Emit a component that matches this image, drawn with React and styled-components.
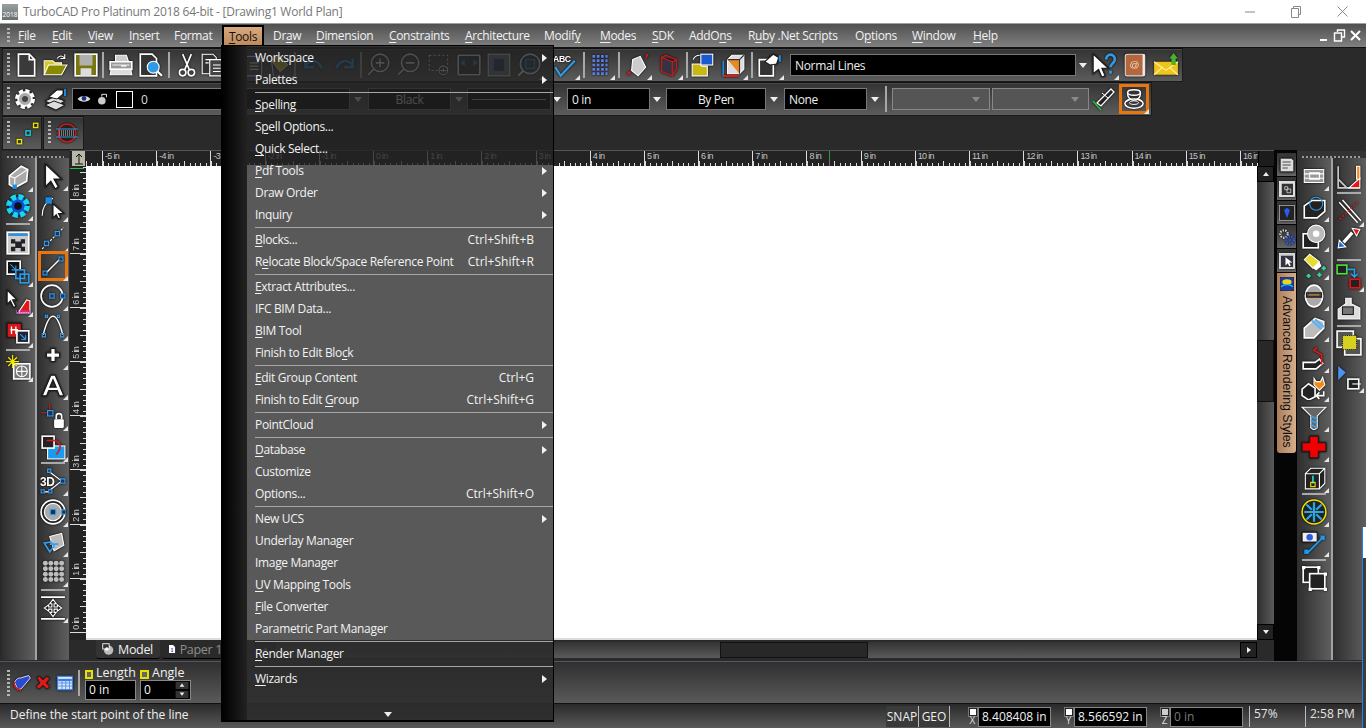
import React from "react"
import styled, { createGlobalStyle } from "styled-components"

const UI = `"Open Sans", "Noto Sans", sans-serif`

//Styles
const GlobalStyles = createGlobalStyle`
  html, body { margin: 0; padding: 0; background: #2a2a2a; overflow: hidden; }
  * { box-sizing: border-box; }
  u { text-underline-offset: 2px; text-decoration-thickness: 1px; }
`
const Screen = styled.div`
  position: relative;
  width: 1366px;
  height: 728px;
  overflow: hidden;
  display: flex;
  flex-direction: column;
  background: #2a2a2a;
  font-family: ${UI};
  font-size: 12px;
  letter-spacing: -0.33px;
  color: #f0f0f0;
`
const TitleBar = styled.div`
  height: 24px;
  flex: none;
  background: #fff;
  display: flex;
  align-items: center;
  padding-left: 2px;
  border-bottom: 1px solid #a0a0a0;
  color: #777;
  letter-spacing: -0.26px;
`
const AppBadge = styled.div`
  width: 16px;
  height: 16px;
  margin-right: 5px;
  background: linear-gradient(#9aa0a0, #6a7070);
  color: #fff;
  font-size: 6.5px;
  letter-spacing: 0;
  display: flex;
  align-items: flex-end;
  justify-content: center;
  line-height: 10px;
`
const WindowButtons = styled.div`
  margin-left: auto;
  display: flex;
  margin-right: 1px;
`
const WindowButton = styled.div`
  width: 46px;
  height: 22px;
  display: flex;
  align-items: center;
  justify-content: center;
`
const MenuBar = styled.div`
  height: 24px;
  flex: none;
  display: flex;
  align-items: center;
  padding-left: 7px;
  background: linear-gradient(#505050, #808080);
  border-bottom: 1px solid #111;
`
const GripV = styled.div`
  width: 3px;
  height: ${(p) => p.$h || 22}px;
  flex: none;
  margin-left: ${(p) => p.$ml || 0}px;
  background: repeating-linear-gradient(#b5b5b5 0 2px, transparent 2px 4px);
`
const MenuItem = styled.div`
  width: ${(p) => p.$w}px;
  flex: none;
  margin-left: ${(p) => p.$ml || 0}px;
  white-space: nowrap;
  color: #f2f2f2;
`
const ActiveMenuItem = styled.div`
  width: 42px;
  height: 21px;
  flex: none;
  margin-left: -6px;
  margin-right: 9px;
  display: flex;
  align-items: center;
  justify-content: center;
  color: #111;
  border: 2px solid #000;
  border-bottom-width: 1px;
  background: linear-gradient(#d8a97f, #c08a5c);
`
const MdiButtons = styled.div`
  margin-left: auto;
  display: flex;
  gap: 3px;
  margin-right: 4px;
`
const ToolRow = styled.div`
  height: 34px;
  flex: none;
  display: flex;
  gap: 1px;
`
const Toolbar = styled.div`
  width: ${(p) => p.$w}px;
  flex: none;
  margin-left: ${(p) => p.$ml ?? 2}px;
  display: flex;
  align-items: center;
  background: linear-gradient(#333, #5c5c5c);
  border: 1px solid #1b1b1b;
  border-top-color: #111;
  box-shadow: inset 0 1px 0 #4a4a4a;
`
const Tool = styled.div`
  position: relative;
  flex: none;
  width: ${(p) => p.$s}px;
  height: ${(p) => p.$s}px;
  margin-left: ${(p) => p.$gap || 0}px;
  display: flex;
  align-items: center;
  justify-content: center;
  ${(p) => p.$flag && `&::after {
    content: "";
    position: absolute;
    right: -2px;
    bottom: -2px;
    border-style: solid;
    border-width: 0 0 5px 5px;
    border-color: transparent transparent #e6e6e6 transparent;
  }`}
  ${(p) => p.$on && `outline: 3px solid #e8760f; outline-offset: -1px;`}
  svg { filter: drop-shadow(0 0 1px #000); }
`
const BarSep = styled.div`
  flex: none;
  width: 2px;
  height: 26px;
  margin-left: ${(p) => p.$gap || 0}px;
  background: #a8a8a8;
`
const Combo = styled.div`
  flex: none;
  width: ${(p) => p.$w}px;
  height: 22px;
  margin-left: ${(p) => p.$gap || 0}px;
  display: flex;
  align-items: center;
  padding: 0 ${(p) => (p.$center ? 0 : 4)}px;
  justify-content: ${(p) => (p.$center ? "center" : "flex-start")};
  gap: 5px;
  background: ${(p) => (p.$off ? "#555" : "#000")};
  border: 1px solid ${(p) => (p.$off ? "#888" : "#777")};
  color: #eee;
`
const Caret = styled.div`
  flex: none;
  width: 0;
  height: 0;
  margin-left: ${(p) => p.$gap || 0}px;
  border-style: solid;
  border-width: 5px 4.5px 0 4.5px;
  border-color: ${(p) => (p.$off ? "#8a8a8a" : "#eee")} transparent transparent transparent;
`
const LayerSwatch = styled.div`
  width: 17px;
  height: 17px;
  margin-left: 1px;
  border: 1px solid #fff;
  background: #000;
`
const LayerNo = styled.span`
  margin-left: 3px;
  color: #ddd;
`
const LineSample = styled.div`
  width: 100%;
  height: 1px;
  background: #bbb;
`
const Main = styled.div`
  flex: none;
  height: 511px;
  display: flex;
`
const ToolBox = styled.div`
  flex: none;
  width: ${(p) => p.$w}px;
  margin: 1px ${(p) => p.$mr || 0}px 1px ${(p) => p.$ml || 0}px;
  display: flex;
  flex-direction: column;
  background: #333;
`
const GripH = styled.div`
  height: 2px;
  margin: 5px 5px 0;
  flex: none;
  background: repeating-linear-gradient(90deg, #999 0 2px, transparent 2px 4px);
`
const BoxCols = styled.div`
  flex: 1;
  display: flex;
`
const BoxCol = styled.div`
  flex: 1;
  display: flex;
  flex-direction: column;
  align-items: center;
  background: linear-gradient(90deg, #2e2e2e, #5e5e5e);
  & + & { border-left: 2px solid #a2a2a2; }
`
const ColSep = styled.div`
  flex: none;
  width: 24px;
  height: 2px;
  margin-top: ${(p) => p.$gap || 0}px;
  background: #aaa;
`
const ColTool = styled(Tool)`
  margin-left: 0;
  margin-top: ${(p) => p.$gap || 0}px;
`
const Center = styled.div`
  flex: 1;
  min-width: 0;
  display: flex;
  flex-direction: column;
`
const TopRulerRow = styled.div`
  height: 16px;
  flex: none;
  display: flex;
  background: #232323;
  border-top: 1px solid #555;
`
const RulerCorner = styled.div`
  width: 13px;
  margin-left: 2px;
  flex: none;
  background: #b9b8a8;
  display: flex;
  align-items: center;
  justify-content: center;
`
const TopRuler = styled.div`
  position: relative;
  flex: none;
  width: 1172px;
  margin-left: 1px;
  display: flex;
  overflow: hidden;
`
const TICKS_H = `
  repeating-linear-gradient(90deg, #ddd 0 1px, transparent 1px 27.1px) 0 100% / 100% 5px no-repeat,
  repeating-linear-gradient(90deg, #ddd 0 1px, transparent 1px 5.42px) 0 100% / 100% 3px no-repeat
`
const InchCell = styled.div`
  flex: none;
  width: ${(p) => p.$w || 54.2}px;
  height: 15px;
  padding-left: 2px;
  border-left: ${(p) => (p.$blank ? 0 : "1px solid #ddd")};
  background: ${TICKS_H};
  font-family: "Liberation Sans", sans-serif;
  font-size: 9px;
  letter-spacing: -0.7px;
  line-height: 11px;
  color: #c4c4c4;
  white-space: nowrap;
`
const CursorMark = styled.div`
  position: absolute;
  left: ${(p) => p.$x}px;
  top: 0;
  width: 1px;
  height: 15px;
  background: linear-gradient(#2f9a3c 70%, #c03ac0 70%);
`
const RulerFill = styled.div`
  flex: 1;
  background: #1c1c1c;
  border-left: 1px solid #000;
`
const MiddleRow = styled.div`
  flex: none;
  height: 474px;
  display: flex;
`
const SideRuler = styled.div`
  position: relative;
  flex: none;
  width: 16px;
  display: flex;
  flex-direction: column;
  justify-content: flex-end;
  padding-bottom: 7px;
  overflow: hidden;
  background: #232323;
`
const SideCell = styled.div`
  flex: none;
  height: 54.2px;
  border-bottom: 1px solid #ddd;
  background:
    repeating-linear-gradient(#ddd 0 1px, transparent 1px 27.1px) 100% 0 / 6px 100% no-repeat,
    repeating-linear-gradient(#ddd 0 1px, transparent 1px 5.42px) 100% 0 / 3px 100% no-repeat;
  display: flex;
  align-items: flex-end;
  padding: 0 0 2px 1px;
`
const SideLabel = styled.span`
  writing-mode: vertical-rl;
  transform: rotate(180deg);
  font-family: "Liberation Sans", sans-serif;
  font-size: 9px;
  letter-spacing: -0.7px;
  line-height: 11px;
  color: #c4c4c4;
  white-space: nowrap;
`
const SideCursor = styled.div`
  position: absolute;
  top: 2px;
  left: 0;
  width: 14px;
  height: 1px;
  background: #22c03c;
`
const Canvas = styled.div`
  flex: none;
  width: 1171px;
  background: #fff;
  border-bottom: 2px solid #dcdcdc;
`
const VScroll = styled.div`
  flex: none;
  width: 17px;
  display: flex;
  flex-direction: column;
  background: linear-gradient(90deg, #2f2f2f, #5a5a5a);
`
const ScrollBtn = styled.div`
  flex: none;
  width: ${(p) => p.$w || 17}px;
  height: 16px;
  background: #222;
  border: 1px solid #000;
  display: flex;
  align-items: center;
  justify-content: center;
  margin-top: ${(p) => (p.$auto ? "auto" : 0)};
  margin-left: ${(p) => (p.$end ? "auto" : 0)};
`
const Arrow = styled.div`
  width: 0;
  height: 0;
  border-style: solid;
  border-color: transparent;
  ${(p) => p.$dir === "up" && `border-width: 0 3.5px 4px; border-bottom-color: #eee;`}
  ${(p) => p.$dir === "down" && `border-width: 4px 3.5px 0; border-top-color: #eee;`}
  ${(p) => p.$dir === "right" && `border-width: 3.5px 0 3.5px 4px; border-left-color: #eee;`}
  ${(p) => p.$dir === "left" && `border-width: 3.5px 4px 3.5px 0; border-right-color: #eee;`}
`
const VThumb = styled.div`
  flex: none;
  height: 62px;
  margin-top: 158px;
  background: #282828;
  border: 1px solid #111;
`
const BottomRow = styled.div`
  flex: 1;
  display: flex;
  align-items: flex-start;
  background: #2a2a2a;
`
const SheetTab = styled.div`
  flex: none;
  width: ${(p) => p.$w}px;
  margin-left: ${(p) => p.$ml || 0}px;
  height: 19px;
  display: flex;
  align-items: center;
  gap: 3px;
  padding-left: 5px;
  background: ${(p) => (p.$on ? "#333" : "#2a2a2a")};
  border-bottom: 1px solid #000;
  border-radius: 0 0 3px 3px;
  color: ${(p) => (p.$on ? "#f0f0f0" : "#8e8e8e")};
  font-size: 12.5px;
  white-space: nowrap;
`
const HScroll = styled.div`
  flex: none;
  display: flex;
  width: 1002px;
  margin-left: 33px;
  margin-top: 2px;
  height: 16px;
  background: linear-gradient(#333, #5a5a5a);
`
const HThumb = styled.div`
  flex: none;
  width: 148px;
  margin-left: 445px;
  background: #282828;
  border: 1px solid #111;
`
const PanelStrip = styled.div`
  flex: none;
  width: 23px;
  padding: 3px 1px 0 3px;
  background: #050505;
  display: flex;
  flex-direction: column;
  gap: 1px;
`
const StripTab = styled.div`
  flex: none;
  height: 23px;
  display: flex;
  align-items: center;
  justify-content: center;
  background: linear-gradient(#333, #666);
  svg { filter: drop-shadow(0 0 1px #000); }
`
const StyleTab = styled.div`
  flex: none;
  height: 180px;
  display: flex;
  flex-direction: column;
  align-items: center;
  padding-top: 3px;
  background: linear-gradient(90deg, #a97e5c, #d8ad8a);
  border-radius: 0 0 3px 3px;
  color: #111;
`
const StyleTabText = styled.div`
  writing-mode: vertical-rl;
  margin-top: 4px;
  font-family: "Liberation Sans", sans-serif;
  font-size: 12.3px;
  letter-spacing: 0;
  line-height: 16px;
  white-space: nowrap;
`
const Inspector = styled.div`
  height: 43px;
  flex: none;
  display: flex;
  align-items: center;
  padding-left: 7px;
  border-top: 1px solid #556;
  border-bottom: 1px solid #111;
  background: linear-gradient(#2f2f2f, #5a5a5a);
`
const SmallGroup = styled.div`
  flex: none;
  margin-left: ${(p) => p.$ml}px;
  width: ${(p) => p.$w}px;
  display: flex;
  flex-direction: column;
`
const GroupHead = styled.div`
  height: 14px;
  display: flex;
  align-items: center;
  gap: 3px;
  font-size: 12.5px;
  letter-spacing: 0;
`
const LockTag = styled.div`
  width: 9px;
  height: 9px;
  margin-top: 3px;
  border: 2px solid #e6e000;
  background: #666;
`
const ValueField = styled.div`
  height: 20px;
  display: flex;
  align-items: center;
  background: #000;
  border: 1px solid #888;
  padding-left: 3px;
  color: ${(p) => (p.$dim ? "#777" : "#f2f2f2")};
  width: ${(p) => (p.$w ? `${p.$w}px` : "auto")};
  flex: ${(p) => (p.$w ? "none" : "initial")};
  font-size: 12px;
  letter-spacing: 0;
`
const Spinner = styled.div`
  margin-left: auto;
  width: 16px;
  height: 100%;
  display: flex;
  flex-direction: column;
  gap: 1px;
  background: #000;
`
const SpinBtn = styled.div`
  flex: 1;
  background: #333;
  display: flex;
  align-items: center;
  justify-content: center;
  transform: scale(0.8);
`
const StatusBar = styled.div`
  flex: none;
  height: 25px;
  display: flex;
  align-items: center;
  padding-left: 10px;
  background: linear-gradient(#2a2a2a, #5a5a5a);
  letter-spacing: 0;
`
const StatusText = styled.span`
  margin-top: -4px;
`
const StatusRight = styled.div`
  margin-left: auto;
  display: flex;
  align-items: center;
  height: 100%;
`
const Toggle = styled.div`
  flex: none;
  width: ${(p) => p.$w}px;
  height: 21px;
  display: flex;
  align-items: center;
  justify-content: center;
  border-right: 1px solid #bbb;
  background: #3a3a3a;
  color: #eee;
`
const CoordGroup = styled.div`
  flex: none;
  margin-left: ${(p) => p.$ml}px;
  display: flex;
  align-items: center;
  gap: 1px;
`
const CoordTag = styled.div`
  width: 9px;
  display: flex;
  flex-direction: column;
  align-items: center;
  font-size: 10px;
  line-height: 9px;
  letter-spacing: 0;
  color: #ddd;
`
const CoordCheck = styled.div`
  width: 8px;
  height: 8px;
  background: ${(p) => (p.$dim ? "#ccc" : "#fff")};
  border: 1px solid #222;
  outline: 1px solid #777;
`
const StatusCell = styled.div`
  flex: none;
  width: ${(p) => p.$w}px;
  margin-left: ${(p) => p.$ml || 0}px;
  height: 21px;
  padding-left: 4px;
  border-left: 1px solid #bbb;
  line-height: 15px;
  color: #e4e4e4;
`
const Dropdown = styled.div`
  position: absolute;
  left: 221px;
  top: 45px;
  width: 333px;
  height: 677px;
  display: flex;
  border: 1px solid #000;
  border-width: 1px 1px 2px 1px;
`
const Gutter = styled.div`
  flex: none;
  width: 25px;
  background: linear-gradient(90deg, #000, #222);
`
const MenuList = styled.div`
  flex: 1;
  padding-top: 1px;
  background: linear-gradient(
    rgba(34, 34, 34, 0.8) 0 119px,
    #595959 119px 594px,
    rgba(44, 44, 44, 0.9) 594px
  );
`
const Row = styled.div`
  height: 22px;
  display: flex;
  align-items: center;
  padding: 0 0 1px 8px;
  white-space: nowrap;
  color: #f2f2f2;
`
const Shortcut = styled.span`
  margin-left: auto;
  margin-right: 19px;
  letter-spacing: 0;
`
const SubArrow = styled.span`
  margin-left: auto;
  margin-right: 6px;
  width: 0;
  height: 0;
  border-style: solid;
  border-width: 4.5px 0 4.5px 5px;
  border-color: transparent transparent transparent #f2f2f2;
`
const RowSep = styled.div`
  height: 3px;
  margin-left: 8px;
  padding-top: 1px;
  &::before {
    content: "";
    display: block;
    height: 1px;
    background: #a6a6a6;
  }
`
const MoreArrow = styled.div`
  position: absolute;
  left: 162px;
  bottom: 3px;
  width: 0;
  height: 0;
  border-style: solid;
  border-width: 5px 4px 0;
  border-color: #eee transparent transparent;
`
const BehindWindow = styled.div`
  position: absolute;
  right: 0;
  top: 527px;
  bottom: 0;
  width: 4px;
  background: linear-gradient(#fff 0 31px, #3c3c3c 31px);
  border-left: 1px solid #1b87e0;
`

//Icon drawings
const W = "#fff"
const K = "#1b1b1b"
const BL = "#1a8be0"
const icons = {
  new: <path d="M5 2h10l5 5v15H5zM15 2v5h5" fill="#3a3a3a" stroke={W} strokeWidth="1.5" />,
  open: <>
    <path d="M2 21V8h8l2 2h6v3" fill="#d8c820" stroke={W} />
    <path d="M2 21l4-9h17l-5 9z" fill="#8a8a00" stroke={W} />
    <path d="M14 6c2-3 5-3 7 0M21 2v4h-4" stroke={W} fill="none" />
  </>,
  save: <>
    <rect x="2" y="2" width="20" height="20" fill="#78780e" stroke={W} strokeWidth="1.5" />
    <rect x="6" y="2.5" width="12" height="10" fill="#b0b0b0" />
    <rect x="7" y="15" width="10" height="7" fill="#ddd" />
  </>,
  print: <>
    <path d="M7 9V3h10l2 6" fill="#ccc" stroke={W} />
    <path d="M2 9h20v7H2z" fill="#999" stroke={W} strokeWidth="1.5" />
    <path d="M3 16l-1 5h20l-1-5z" fill="#ddd" stroke={W} />
    <path d="M4 12h16M12 13h5" stroke="#eee" />
  </>,
  preview: <>
    <path d="M3 2h11l4 4v16H3z" fill="#333" stroke={W} strokeWidth="1.5" />
    <circle cx="15" cy="14" r="5.5" fill="#2f9be6" stroke={W} />
    <path d="M19 18l4 4" stroke={W} strokeWidth="2" />
  </>,
  cut: <>
    <path d="M8 2l6 14M16 2l-6 14" stroke={W} strokeWidth="1.5" />
    <circle cx="8" cy="19" r="3" fill="none" stroke={W} strokeWidth="1.5" />
    <circle cx="16" cy="19" r="3" fill="none" stroke={W} strokeWidth="1.5" />
  </>,
  copy: <>
    <path d="M2 2h10l3 3v15H2z" fill="#333" stroke={W} />
    <path d="M9 7h10l3 3v12H9z" fill="#444" stroke={W} />
    <path d="M5 7h5M5 10h3M12 12h7M12 15h7M12 18h7" stroke={W} />
  </>,
  paste: <path d="M6 4h10l4 4v14H6zM9 10h8M9 13h8M9 16h8" fill="#444" stroke={W} />,
  paint: <path d="M5 8l7-5 8 9-7 6zM5 8l2 14" fill="#d8c820" stroke={W} />,
  undo: <path d="M5 6v8h8M5 13c4-7 12-6 15 2" fill="none" stroke="#2f9be6" strokeWidth="2.5" />,
  redo: <path d="M20 6v8h-8M20 13c-4-7-12-6-15 2" fill="none" stroke="#2f9be6" strokeWidth="2.5" />,
  zoomIn: <>
    <circle cx="13" cy="10" r="8" fill="none" stroke={W} strokeWidth="1.5" />
    <path d="M9 10h8M13 6v8M7 16l-5 5" stroke={W} strokeWidth="1.5" />
  </>,
  zoomOut: <>
    <circle cx="13" cy="10" r="8" fill="none" stroke={W} strokeWidth="1.5" />
    <path d="M9 10h8M7 16l-5 5" stroke={W} strokeWidth="1.5" />
  </>,
  zoomWin: <>
    <rect x="3" y="3" width="17" height="14" fill="none" stroke={W} strokeDasharray="2 2" />
    <circle cx="16" cy="17" r="4" fill="none" stroke={W} />
    <path d="M16 15v4M14 17h4" stroke={W} />
  </>,
  fit: <>
    <rect x="2" y="3" width="20" height="18" rx="1" fill="#333" stroke={W} strokeWidth="1.5" />
    <path d="M4 10l4-3v6zM20 10l-4-3v6z" fill="#2f9be6" />
  </>,
  extents: <>
    <rect x="2" y="2" width="20" height="20" fill="#777" stroke={W} />
    <rect x="7" y="6" width="10" height="12" fill="#335" stroke={BL} />
  </>,
  zoomAll: <>
    <circle cx="13" cy="11" r="9" fill="none" stroke={W} strokeWidth="1.5" />
    <rect x="9" y="7" width="8" height="8" fill="none" stroke="#2f9be6" strokeWidth="1.5" />
    <path d="M7 17l-5 5" stroke={W} strokeWidth="2" />
  </>,
  spell: <>
    <text x="1" y="9" fontFamily="Liberation Sans" fontSize="8" fontWeight="700" fill={W}>ABC</text>
    <path d="M3 14l5 8L21 8" fill="none" stroke="#2f9be6" strokeWidth="2" />
  </>,
  dots: <path d="M5 4h14M5 8h14M5 12h14M5 16h14M5 20h14" stroke="#5a7fe8" strokeWidth="2.5" strokeDasharray="2.5 1.5" />,
  bucket: <>
    <path d="M8 7l7-3 5 10-7 8-6-5z" fill="#ccc" stroke={W} />
    <path d="M20 2l2 2M22 2l-2 4M3 21l3-3M3 18l3 3" stroke="#e01818" strokeWidth="1.2" />
  </>,
  cubeRed: <path d="M6 5l10 4v13L6 18zM16 9l4-2v9l-4 6M6 5l4-2 10 4" fill="#334" stroke="#c81818" strokeWidth="1.2" />,
  folderBox: <>
    <path d="M2 22V11h7l2 2h5v9z" fill="#c8b814" stroke={W} />
    <rect x="10" y="2" width="11" height="10" fill="#1a5ad0" stroke={W} />
    <path d="M3 7c1-3 3-4 6-4" stroke={W} fill="none" />
  </>,
  boxAxis: <>
    <path d="M7 7l4-4h11v13l-4 4H7z" fill="#ddd" stroke={W} />
    <path d="M7 7h11v13M18 7l4-4" fill="#e88a20" stroke="#333" />
    <path d="M3 8v14h14" stroke="#1a8be0" strokeWidth="1.5" fill="none" />
    <path d="M3 22h14" stroke="#e01818" strokeWidth="2" />
  </>,
  hand: <>
    <path d="M3 7h13v15H3z" fill="#333" stroke={W} strokeWidth="1.5" />
    <path d="M8 9l8-7 5 3-2 6-6 1z" fill={W} stroke={K} />
    <path d="M22 3v6" stroke={BL} strokeWidth="2" />
  </>,
  helpCursor: <>
    <path d="M2 2v18l5-4 3 7 3-1-3-7h6z" fill={W} stroke={K} />
    <path d="M14 7c0-6 8-6 8 0 0 3-4 4-4 7M18 17v3" fill="none" stroke="#2f9be6" strokeWidth="2.5" />
  </>,
  book: <>
    <rect x="3" y="2" width="18" height="20" rx="2" fill="#b4663c" stroke="#ddd" />
    <rect x="19" y="2" width="2" height="20" fill="#eee" />
    <text x="7" y="15" fontFamily="Liberation Sans" fontSize="9" fill="#f1d9c6">@</text>
  </>,
  mail: <>
    <path d="M1 9h22v12H1z" fill="#f0c419" />
    <path d="M1 9l11 8 11-8M1 21l8-7M23 21l-8-7" fill="none" stroke="#fff3b0" />
    <path d="M19 1l4 5h-2v6h-4V6h-2z" fill="#4caf2e" />
  </>,
  gearWhite: <>
    <circle cx="12" cy="12" r="8" fill="#ccc" stroke={W} strokeWidth="4" strokeDasharray="4 2.3" />
    <circle cx="12" cy="12" r="6.5" fill="#aaa" stroke={W} />
    <circle cx="12" cy="12" r="3" fill="#444" />
  </>,
  layers: <>
    <path d="M2 14l9-4 11 4-9 5z" fill="#ddd" stroke={K} />
    <path d="M2 18l9-4 11 4-9 5z" fill="#ddd" stroke={K} />
    <path d="M6 10l8-7h6v4l-6 5z" fill={W} stroke={K} />
    <path d="M22 2v7" stroke={BL} strokeWidth="2" />
  </>,
  eye: <>
    <path d="M1 12c5-7 17-7 22 0-5 6-17 6-22 0z" fill="#ddd" />
    <circle cx="12" cy="11" r="4" fill="#17337e" />
  </>,
  bulb: <>
    <circle cx="10" cy="15" r="6.5" fill="#ccc" />
    <path d="M10 8V4h8v5" fill="none" stroke={W} strokeWidth="1.5" />
  </>,
  pen: <>
    <path d="M20 2l3 3-13 14-4-3z" fill="#222" stroke={W} strokeWidth="1.3" />
    <path d="M11 6l6 5" stroke={W} />
    <path d="M2 14l8 9" stroke="#22c03c" strokeWidth="1.8" />
  </>,
  cup: <>
    <ellipse cx="12" cy="5" rx="7" ry="3" fill="#333" stroke={W} strokeWidth="1.6" />
    <path d="M5 5c0 4 1 6 3 7-3 1-4 2-5 3M19 5c0 4-1 6-3 7 3 1 4 2 5 3" fill="none" stroke={W} strokeWidth="1.6" />
    <path d="M7 12c3 2 7 2 10 0" fill="none" stroke={W} />
    <ellipse cx="12" cy="17" rx="10" ry="5" fill="none" stroke={W} strokeWidth="1.6" />
    <ellipse cx="12" cy="16" rx="5" ry="2" fill="none" stroke={W} />
  </>,
  pts: <>
    <rect x="18" y="3" width="4" height="4" fill="none" stroke="#f0e800" strokeWidth="1.2" />
    <rect x="11" y="10" width="4" height="4" fill="none" stroke="#18d8e8" strokeWidth="1.2" />
    <rect x="3" y="18" width="4" height="4" fill="none" stroke="#f0e800" strokeWidth="1.2" />
  </>,
  hatchCircle: <>
    <circle cx="12" cy="12" r="9" fill="#222" stroke="#e01818" strokeWidth="1.4" />
    <path d="M1 8h22M1 16h22" stroke="#2f9be6" />
    <path d="M4 10h16M4 12h16M4 14h16" stroke="#ccc" strokeDasharray="1 1" />
  </>,
  box3d: <>
    <path d="M4 11l11-9 6 3-1 11-11 6-5-3z" fill="#aaa" stroke={W} strokeWidth="1.5" />
    <path d="M9 22V13l12-8M9 13l-5-2" fill="none" stroke={W} />
    <rect x="7" y="19" width="4" height="4" fill={BL} />
  </>,
  gearBlue: <>
    <circle cx="12" cy="12" r="8.5" fill="#0a50d8" stroke="#18d8e8" strokeWidth="5" strokeDasharray="4.5 2.2" />
    <circle cx="12" cy="12" r="3.5" fill="#111" />
  </>,
  window: <>
    <rect x="2" y="2" width="20" height="20" fill="#ccc" stroke={W} strokeWidth="1.5" />
    <rect x="3" y="3" width="18" height="2.5" fill="#2f8fd8" />
    <path d="M6 9h3v3H6zM15 9h3v3h-3zM6 16h3v3H6zM15 16h3v3h-3zM10 11h5v5h-5z" fill="#223" stroke="#222" />
  </>,
  overlap: <>
    <rect x="2" y="2" width="12" height="12" fill="#111" stroke={W} strokeWidth="1.5" />
    <path d="M5 5l5 5M10 6v4H6" stroke="#2f9be6" fill="none" />
    <rect x="10" y="10" width="8" height="8" fill="#223" stroke="#2f9be6" strokeWidth="1.5" />
    <rect x="14" y="14" width="8" height="8" fill="none" stroke="#2f9be6" strokeWidth="1.5" />
  </>,
  pointerRed: <>
    <path d="M2 1v13l3-3 3 6 2-1-3-6h4z" fill={W} stroke={K} />
    <path d="M12 22l8-12 3 1v11z" fill="#e01818" stroke={W} />
    <path d="M10 21h13" stroke="#e838c8" strokeWidth="3" strokeDasharray="1 1" />
  </>,
  redBlue: <>
    <rect x="2" y="3" width="13" height="13" fill="#d81818" stroke={K} />
    <path d="M6 6v7M10 6v7M5 9h7" stroke={W} strokeWidth="1.2" />
    <rect x="11" y="10" width="11" height="11" fill="#223" stroke={W} strokeWidth="1.5" />
    <path d="M14 13l5 5M19 14v4h-4" stroke="#2f9be6" fill="none" />
  </>,
  spark: <>
    <rect x="8" y="9" width="15" height="14" fill="#777" stroke={W} strokeWidth="1.5" />
    <circle cx="15.5" cy="16" r="5" fill="none" stroke={W} />
    <path d="M10.5 16h10M15.5 11v10" stroke={W} />
    <path d="M7 1v12M1 7h12M3 3l8 8M11 3l-8 8" stroke="#f0e800" strokeWidth="1.2" />
  </>,
  arrow: <path d="M5 1v21l5-5 4 7 3-2-4-7h7z" fill={W} stroke={K} strokeWidth="1.2" />,
  pickArrow: <>
    <path d="M2 20c0-8 4-13 10-16" fill="none" stroke={W} />
    <rect x="5" y="3" width="6" height="6" fill={BL} />
    <path d="M12 9v13l3-3 2 4 2-1-2-4h5z" fill={W} stroke={K} />
  </>,
  segment: <>
    <path d="M2 22L22 2" stroke={W} strokeDasharray="2 1.5" />
    <rect x="4" y="15" width="4" height="4" fill="#17345e" stroke="#3aa0ee" />
    <rect x="14" y="6" width="4" height="4" fill="#17345e" stroke="#3aa0ee" />
  </>,
  line: <>
    <path d="M5 19L19 5" stroke={W} strokeWidth="1.5" />
    <rect x="2" y="17" width="4" height="4" fill="#17345e" stroke="#3aa0ee" />
    <rect x="18" y="3" width="4" height="4" fill="#17345e" stroke="#3aa0ee" />
  </>,
  circle: <>
    <circle cx="11" cy="12" r="10" fill="none" stroke={W} strokeWidth="1.5" />
    <rect x="9" y="10" width="4" height="4" fill="#17345e" stroke="#3aa0ee" />
    <rect x="19" y="10" width="4" height="4" fill="#17345e" stroke="#3aa0ee" />
  </>,
  arch: <>
    <path d="M3 20C6 8 9 3 12 3s6 5 9 17" fill="none" stroke={W} strokeWidth="1.3" />
    <path d="M2 19h3v3H2zM19 19h3v3h-3zM5 2h2v2H5zM16 2h2v2h-2z" fill="none" stroke="#3aa0ee" />
  </>,
  plus: <path d="M10 6h4v4h4v4h-4v4h-4v-4H6v-4h4z" fill={W} stroke={K} />,
  letterA: <path d="M2 22L10 3h4l8 19h-4l-2-5H8l-2 5zM9 14h6l-3-7z" fill={W} stroke={K} fillRule="evenodd" />,
  lockPt: <>
    <path d="M1 9h8M9 1v6" stroke="#e01818" />
    <rect x="7" y="7" width="5" height="5" fill="#17345e" stroke="#3aa0ee" />
    <rect x="13" y="15" width="9" height="8" rx="1" fill={W} />
    <path d="M15 15v-3c0-3 5-3 5 0v3" fill="none" stroke={W} strokeWidth="1.5" />
  </>,
  swatch: <>
    <rect x="7" y="11" width="16" height="12" fill="#1a9bf0" stroke={W} />
    <rect x="2" y="2" width="11" height="11" fill="#222" stroke={W} strokeWidth="1.5" />
    <path d="M6 6h7c6 1 8 6 2 13" fill="none" stroke="#e01818" strokeWidth="1.5" />
  </>,
  threeD: <>
    <text x="0" y="17" fontFamily="Liberation Sans" fontSize="11" fontWeight="700" fill={W}>3D</text>
    <path d="M8 3l12 9-13 10H2" fill="none" stroke={W} />
    <path d="M7 1h3v3H7zM19 10h4v4h-4zM8 20h3v3H8zM1 20h3v3H1z" fill="#17345e" stroke="#3aa0ee" />
  </>,
  disc: <>
    <circle cx="12" cy="12" r="11" fill="#222" stroke={W} strokeWidth="1.5" />
    <circle cx="12" cy="12" r="8" fill="#aaa" stroke={W} />
    <rect x="9.5" y="9.5" width="5" height="5" fill="#17345e" stroke="#3aa0ee" />
    <rect x="20" y="10" width="4" height="4" fill="#17345e" stroke="#3aa0ee" />
  </>,
  drum: <>
    <path d="M9 7l11-3 2 11-9 5z" fill="#bbb" stroke={W} />
    <path d="M4 13l6-1 3 4-4 5zM9 14h8" fill="none" stroke="#3aa0ee" strokeWidth="1.5" />
  </>,
  balls: <>
    {[4, 9, 14, 19].map((y) => [5, 10, 15, 20].map((x) => <circle key={`${x}-${y}`} cx={x} cy={y} r="2.3" fill="#bdbdbd" />))}
  </>,
  moveAll: <>
    <path d="M1 2h22M1 22h22" stroke={W} strokeWidth="1.5" />
    <path d="M12 4l3 4h-2v3h3V9l4 3-4 3v-2h-3v3h2l-3 4-3-4h2v-3H8v2l-4-3 4-3v2h3V8H9z" fill={K} stroke={W} />
  </>,
  layersSm: <path d="M3 6h18v12H3zM3 10h18M3 14h18M8 9h9v6H8z" fill="#999" stroke={W} />,
  cubeView: <>
    <path d="M3 11l7-5h12v10l-7 6H3z" fill="#222" stroke={W} strokeWidth="1.5" />
    <circle cx="14" cy="9" r="6" fill="none" stroke="#2f9be6" />
  </>,
  sphere: <>
    <rect x="2" y="9" width="14" height="13" fill="#222" stroke={W} strokeWidth="1.5" />
    <circle cx="14" cy="9" r="8" fill="#bbb" stroke={W} />
    <circle cx="14" cy="9" r="3" fill="#fff" />
  </>,
  pencilDots: <>
    <path d="M3 7l5-5 9 7-6 6z" fill="#e8dc30" stroke={W} />
    <path d="M11 15l6-6 2 4-5 4z" fill="#fff" />
    <path d="M5 22h4M7 20v4M15 21h4M17 19v4M19 15h4M21 13v4" stroke="#3ad0a0" strokeWidth="1.8" />
  </>,
  barrel: <>
    <ellipse cx="12" cy="12" rx="8" ry="10" fill="#aaa" stroke={W} strokeWidth="1.5" />
    <path d="M5 9h14v4H5z" fill="#444" stroke={K} />
    <path d="M7 11h10" stroke="#e88a20" />
  </>,
  eraser: <>
    <path d="M3 13l10-9 8 3v6l-9 9H3z" fill="#bbb" stroke={W} strokeWidth="1.5" />
    <path d="M10 6l9 8M13 5l8 7" stroke="#5ab0f0" strokeWidth="2" />
  </>,
  pipe: <>
    <path d="M2 22v-6h11l4-3 3 4-6 5z" fill="#222" stroke={W} strokeWidth="1.5" />
    <path d="M15 2l-3 3 7 4v9" fill="none" stroke="#e01818" strokeWidth="1.5" />
  </>,
  wrench: <>
    <path d="M1 14l6-5 6 4v8l-6 3-6-4z" fill="#222" stroke={W} strokeWidth="1.5" />
    <path d="M12 4l2 3h4l2-4 2 7-5 5-5-5z" fill="#f08a18" stroke={W} />
    <path d="M21 16v4h-7M17 17l-3 3 3 3" fill="none" stroke={W} strokeWidth="1.5" />
  </>,
  screw: <>
    <path d="M1 3h22l-8 8v11l-3 2-3-2V11z" fill="#666" stroke={W} />
    <path d="M9 11l6 3M9 15l6 3M9 19l6 3" stroke="#3aa0ee" strokeWidth="1.5" />
  </>,
  redCross: <path d="M8 2h8v6h7v8h-7v6H8v-6H1V8h7z" fill="#f00000" stroke={K} />,
  cubeFrame: <>
    <path d="M4 8l5-5h13v14l-5 5H4zM4 8h13v14M17 8l5-5" fill="#222" stroke={W} />
    <path d="M11 10v7" stroke="#18d8e8" strokeWidth="1.5" />
    <rect x="9" y="16" width="4" height="4" fill="none" stroke="#f0e800" />
  </>,
  compass: <>
    <circle cx="12" cy="12" r="11" fill="#222" stroke="#f0e800" strokeWidth="1.4" />
    <path d="M5 5l5 5M19 5l-5 5M5 19l5-5M19 19l-5-5M3 12h18M12 3v18" stroke="#29a8e8" strokeWidth="2" />
  </>,
  cameraLine: <>
    <rect x="1" y="3" width="14" height="9" rx="1" fill="#eee" stroke={K} />
    <circle cx="8" cy="7.5" r="3" fill="#2f5ae0" />
    <path d="M6 22L20 8" stroke="#1a9bf0" strokeWidth="1.8" />
    <rect x="3" y="19" width="4" height="4" fill="#1a9bf0" />
    <rect x="18" y="6" width="4" height="4" fill="#1a9bf0" />
  </>,
  frames: <>
    <rect x="2" y="2" width="14" height="14" fill="#222" stroke={W} strokeWidth="1.5" />
    <rect x="8" y="8" width="14" height="14" fill="#222" stroke={W} strokeWidth="1.5" />
    <path d="M1 1h3v3H1zM15 1h3v3h-3zM21 7h3v3h-3zM21 21h3v3h-3zM7 21h3v3H7z" fill={W} />
  </>,
  chart: <>
    <path d="M2 2v20h20M2 14l8 8" fill="none" stroke="#ccc" strokeWidth="1.5" />
    <path d="M12 22L22 13v9z" fill="#e01818" stroke={W} />
    <path d="M19 2h3v12h-3z" fill="#f08a18" stroke={W} />
  </>,
  cutLines: <>
    <path d="M6 1l17 19M3 3l17 19" stroke={W} strokeWidth="1.3" />
    <path d="M20 3L2 20" stroke="#e01818" strokeDasharray="2 1.5" strokeWidth="1.3" />
  </>,
  dimArrow: <>
    <path d="M7 17l8-9" stroke={W} strokeWidth="3" />
    <path d="M15 4l7 1-3 6z" fill="#e01818" stroke={W} />
    <path d="M2 22l1-7 6 6z" fill="#1a6be0" stroke={W} />
  </>,
  transfer: <>
    <rect x="1" y="1" width="9" height="8" fill="#222" stroke="#4ee040" strokeWidth="1.5" />
    <rect x="13" y="14" width="9" height="8" fill="#222" stroke="#e01818" strokeWidth="1.5" />
    <path d="M10 5h7v7M14 9l3 3 3-3" fill="none" stroke="#2f9be6" strokeWidth="1.5" />
  </>,
  stamp: <>
    <path d="M2 13l7-5V3h5v5l8 4v10H2z" fill="#ddd" stroke={W} />
    <rect x="6" y="11" width="10" height="7" fill="#777" stroke={K} />
  </>,
  hatchBox: <>
    <rect x="1" y="1" width="15" height="15" fill="#555" stroke={W} strokeWidth="1.5" />
    <rect x="8" y="8" width="15" height="15" fill="#555" stroke={W} strokeWidth="1.5" />
    <rect x="6" y="5" width="13" height="13" fill="#d8d020" stroke={K} strokeDasharray="1 1" />
  </>,
  playBlock: <>
    <path d="M2 1l7 6-7 7z" fill="#4a94f0" />
    <rect x="11" y="13" width="10" height="9" fill="#222" stroke={W} strokeWidth="1.5" />
    <path d="M15 17.5h8" stroke={W} />
  </>,
  docCoin: <path d="M3 3h15l3 3v15H3zM6 8h11M6 12h11M6 16h7" fill="#ddd" stroke={K} />,
  viewWin: <>
    <rect x="2" y="2" width="20" height="20" fill="#ddd" stroke={W} />
    <rect x="5" y="5" width="15" height="15" fill="#333" />
    <path d="M9 9h4v4H9zM12 12h5v5h-5z" fill="none" stroke="#ddd" />
  </>,
  bluePrint: <>
    <rect x="2" y="2" width="20" height="20" fill="#222" stroke="#bbb" />
    <path d="M8 8l4-3 4 3-4 11z" fill="#2a5af0" />
  </>,
  cogs: <>
    <circle cx="8" cy="8" r="5" fill="none" stroke="#ccc" strokeWidth="3" strokeDasharray="2 1.5" />
    <circle cx="16" cy="16" r="5" fill="none" stroke="#2a5af0" strokeWidth="3.4" strokeDasharray="2 1.5" />
  </>,
  arrowWin: <>
    <rect x="2" y="2" width="20" height="20" fill="#ccc" stroke={W} />
    <rect x="4" y="5" width="16" height="15" fill="#334" />
    <path d="M10 7v11l3-3 2 4 2-1-2-4h4z" fill={W} />
  </>,
  renderTea: <>
    <rect x="2" y="2" width="20" height="20" fill="#1a3ab0" stroke="#222" />
    <ellipse cx="12" cy="9" rx="7" ry="4" fill="#e8d820" />
    <path d="M3 16c5-4 13-4 18 0" stroke="#29c0e8" strokeWidth="2" fill="none" />
  </>,
  redCheck: <>
    <path d="M3 11c3-5 5-5 7-5L20 3l2 3-11 13-4 1z" fill="#2a4ad0" stroke={W} />
    <path d="M3 11c-1 4 2 8 8 10" fill="none" stroke="#e01818" strokeWidth="1.8" />
  </>,
  redX: <path d="M4 5l3-2 5 5 5-5 4 3-5 6 5 5-4 3-5-5-5 5-4-3 5-5z" fill="#e01818" stroke={K} />,
  table: <>
    <rect x="2" y="3" width="20" height="18" fill="#d8e6fa" stroke="#3a7ee0" strokeWidth="1.6" />
    <path d="M3 8h18" stroke="#3a7ee0" strokeWidth="3" />
    <path d="M3 12h18M3 16h18M8 8v13M13 8v13M18 8v13" stroke="#3a7ee0" />
  </>,
  modelTab: <>
    <circle cx="13" cy="14" r="8" fill="#bbb" />
    <rect x="3" y="3" width="11" height="9" fill="#333" stroke={W} strokeWidth="1.5" />
    <circle cx="10" cy="12" r="3" fill={W} />
  </>,
  paperTab: <>
    <path d="M5 2h10l5 5v15H5z" fill={W} />
    <text x="9" y="19" fontFamily="Liberation Sans" fontSize="11" fontWeight="700" fill="#2222c0">1</text>
  </>,
}
const Icon = ({ name, size = 26 }) => (
  <svg width={size} height={size} viewBox="0 0 24 24" aria-hidden="true">
    {icons[name]}
  </svg>
)

//Menu labels with one underlined access key
const Key = ({ text, at }) =>
  at === undefined ? (
    text
  ) : (
    <span>
      {text.slice(0, at)}
      <u>{text[at]}</u>
      {text.slice(at + 1)}
    </span>
  )

const MENUS = [
  ["File", 0, 34], ["Edit", 0, 36], ["View", 0, 41], ["Insert", 0, 45], ["Format", 1, 54],
  ["Tools", 0], ["Draw", 2, 43], ["Dimension", 0, 73], ["Constraints", 0, 76], ["Architecture", 0, 79],
  ["Modify", 5, 56], ["Modes", 0, 52], ["SDK", 0, 37], ["AddOns", 4, 59], ["Ruby .Net Scripts", 1, 107],
  ["Options", 1, 57], ["Window", 0, 61], ["Help", 0, 40],
]

const TOOLS_MENU = [
  ["Workspace", undefined, ">"], ["Palettes", undefined, ">"], "-",
  ["Spelling", 0], ["Spell Options...", 1], ["Quick Select...", 0], ["Pdf Tools", 0, ">"],
  ["Draw Order", undefined, ">"], ["Inquiry", undefined, ">"], "-",
  ["Blocks...", 0, "Ctrl+Shift+B"], ["Relocate Block/Space Reference Point", 1, "Ctrl+Shift+R"], "-",
  ["Extract Attributes...", 0], ["IFC BIM Data..."], ["BIM Tool", 0], ["Finish to Edit Block", 18], "-",
  ["Edit Group Content", 0, "Ctrl+G"], ["Finish to Edit Group", 15, "Ctrl+Shift+G"], "-",
  ["PointCloud", undefined, ">"], "-",
  ["Database", 0, ">"], ["Customize"], ["Options...", undefined, "Ctrl+Shift+O"], "-",
  ["New UCS", undefined, ">"], ["Underlay Manager"], ["Image Manager"], ["UV Mapping Tools", 0],
  ["File Converter", 0], ["Parametric Part Manager"], "-",
  ["Render Manager", 0], "-",
  ["Wizards", 0, ">"],
]

// turn wanted centre positions into the gaps between flow items
const withGaps = (items, start, size) => {
  let end = start
  return items.map((it) => {
    const s = it.size || size
    const gap = it.at - s / 2 - end
    end = it.at + s / 2
    return { ...it, s, gap }
  })
}

const ROW_ONE = withGaps(
  [
    { i: "new", at: 26 }, { i: "open", at: 55 }, { i: "save", at: 86 }, { sep: 1, at: 103, size: 2 },
    { i: "print", at: 121 }, { i: "preview", at: 150 }, { sep: 1, at: 169, size: 2 },
    { i: "cut", at: 187 }, { i: "copy", at: 213 }, { i: "paste", at: 253 }, { i: "paint", at: 279, f: 1 },
    { sep: 1, at: 295, size: 2 }, { i: "undo", at: 313 }, { i: "redo", at: 344 }, { sep: 1, at: 361, size: 2 },
    { i: "zoomIn", at: 379 }, { i: "zoomOut", at: 409 }, { i: "zoomWin", at: 439 }, { i: "fit", at: 469 },
    { i: "extents", at: 499 }, { i: "zoomAll", at: 529, f: 1 }, { i: "spell", at: 565, f: 1 },
    { sep: 1, at: 584, size: 2 }, { i: "dots", at: 600, f: 1 }, { sep: 1, at: 619, size: 2 },
    { i: "bucket", at: 637, f: 1 }, { i: "cubeRed", at: 668, f: 1 }, { sep: 1, at: 687, size: 2 },
    { i: "folderBox", at: 703 }, { i: "boxAxis", at: 733, f: 1 }, { sep: 1, at: 752, size: 2 },
    { i: "hand", at: 769, f: 1 },
  ],
  10,
  26
)

const LEFT_ONE = withGaps(
  [
    { i: "box3d", at: 177, f: 1 }, { i: "gearBlue", at: 206, f: 1 }, { sep: 1, at: 224, size: 2 },
    { i: "window", at: 243 }, { i: "overlap", at: 272, f: 1 }, { i: "pointerRed", at: 302, f: 1 },
    { i: "redBlue", at: 333, f: 1 }, { sep: 1, at: 350, size: 2 }, { i: "spark", at: 367, f: 1 },
  ],
  158,
  26
)
const LEFT_TWO = withGaps(
  [
    { i: "arrow", at: 176, f: 1 }, { i: "pickArrow", at: 207, f: 1 }, { i: "segment", at: 238, f: 1 },
    { i: "line", at: 266, f: 1, on: 1 }, { i: "circle", at: 296, f: 1 }, { i: "arch", at: 326, f: 1 },
    { i: "plus", at: 355, f: 1 }, { i: "letterA", at: 385, f: 1 }, { i: "lockPt", at: 416, f: 1 },
    { i: "swatch", at: 447, f: 1 }, { sep: 1, at: 463, size: 2 }, { i: "threeD", at: 481, f: 1 },
    { i: "disc", at: 512, f: 1 }, { i: "drum", at: 542, f: 1 }, { i: "balls", at: 572, f: 1 },
    { sep: 1, at: 590, size: 2 }, { i: "moveAll", at: 608, f: 1 },
  ],
  158,
  26
)
const RIGHT_ONE = withGaps(
  [
    { i: "layersSm", at: 176, f: 1 }, { i: "cubeView", at: 207, f: 1 }, { i: "sphere", at: 237, f: 1 },
    { i: "pencilDots", at: 265, f: 1 }, { i: "barrel", at: 296, f: 1 }, { i: "eraser", at: 327, f: 1 },
    { i: "pipe", at: 358, f: 1 }, { i: "wrench", at: 387, f: 1 }, { i: "screw", at: 417, f: 1 },
    { i: "redCross", at: 447, f: 1 }, { i: "cubeFrame", at: 478, f: 1 }, { sep: 1, at: 494, size: 2 },
    { i: "compass", at: 512, f: 1 }, { i: "cameraLine", at: 542, f: 1 }, { sep: 1, at: 560, size: 2 },
    { i: "frames", at: 578 },
  ],
  158,
  26
)
const RIGHT_TWO = withGaps(
  [
    { i: "chart", at: 177 }, { sep: 1, at: 193, size: 2 }, { i: "cutLines", at: 212, f: 1 },
    { i: "dimArrow", at: 237 }, { sep: 1, at: 260, size: 2 }, { i: "transfer", at: 277, f: 1 },
    { i: "stamp", at: 308 }, { sep: 1, at: 326, size: 2 }, { i: "hatchBox", at: 343 },
    { i: "playBlock", at: 378, f: 1 },
  ],
  158,
  26
)

const Column = ({ items }) => (
  <BoxCol>
    {items.map((it, n) =>
      it.sep ? (
        <ColSep key={n} $gap={it.gap} />
      ) : (
        <ColTool key={n} $s={it.s} $gap={it.gap} $flag={it.f} $on={it.on}>
          <Icon name={it.i} size={it.on ? 24 : 26} />
        </ColTool>
      )
    )}
  </BoxCol>
)

const App = () => {
  const inches = []
  for (let n = -5; n <= 16; n++) inches.push(n)
  const sideInches = [8, 7, 6, 5, 4, 3, 2, 1, 0]

  return (
    <>
      <GlobalStyles />
      <Screen>
        <TitleBar>
          <AppBadge>2018</AppBadge>
          TurboCAD Pro Platinum 2018 64-bit - [Drawing1 World Plan]
          <WindowButtons>
            <WindowButton>
              <svg width="10" height="10"><path d="M0 5h10" stroke="#888" /></svg>
            </WindowButton>
            <WindowButton>
              <svg width="10" height="12"><path d="M2.5 2.5V.5h7v8h-2M.5 2.5h7v9h-7z" fill="none" stroke="#888" /></svg>
            </WindowButton>
            <WindowButton>
              <svg width="11" height="11"><path d="M.5.5l10 10M10.5.5l-10 10" stroke="#888" /></svg>
            </WindowButton>
          </WindowButtons>
        </TitleBar>

        <MenuBar>
          <GripV $h={16} />
          {MENUS.map(([label, at, w]) =>
            label === "Tools" ? (
              <ActiveMenuItem key={label}><Key text={label} at={at} /></ActiveMenuItem>
            ) : (
              <MenuItem key={label} $w={w} $ml={label === "File" ? 8 : 0}><Key text={label} at={at} /></MenuItem>
            )
          )}
          <MdiButtons>
            <svg width="13" height="13"><path d="M3 11h7" stroke="#fff" strokeWidth="2" /></svg>
            <svg width="13" height="13"><path d="M4.5 3V1h7v7H9M1.5 4h7v8h-7z" fill="none" stroke="#fff" strokeWidth="1.4" /></svg>
            <svg width="13" height="13"><path d="M2 2l9 9M11 2l-9 9" stroke="#fff" strokeWidth="2" /></svg>
          </MdiButtons>
        </MenuBar>

        <ToolRow>
          <Toolbar $w={1181}>
            <GripV $h={24} $ml={4} />
            {ROW_ONE.map((it, n) =>
              it.sep ? (
                <BarSep key={n} $gap={it.gap} />
              ) : (
                <Tool key={n} $s={it.s} $gap={it.gap} $flag={it.f}>
                  <Icon name={it.i} />
                </Tool>
              )
            )}
            <Combo $w={286} $gap={8}>Normal Lines</Combo>
            <Caret $gap={3} />
            <Tool $s={26} $gap={4} $flag={1}><Icon name="helpCursor" /></Tool>
            <Tool $s={26} $gap={5}><Icon name="book" /></Tool>
            <Tool $s={26} $gap={5}><Icon name="mail" /></Tool>
          </Toolbar>
        </ToolRow>

        <ToolRow>
          <Toolbar $w={1150}>
            <GripV $h={24} $ml={4} />
            <Tool $s={26} $gap={2}><Icon name="gearWhite" size={24} /></Tool>
            <Tool $s={26} $gap={4}><Icon name="layers" size={24} /></Tool>
            <Combo $w={278} $gap={4}>
              <Icon name="eye" size={14} />
              <Icon name="bulb" size={14} />
              <LayerSwatch />
              <LayerNo>0</LayerNo>
            </Combo>
            <Caret $gap={4} />
            <Combo $w={83} $gap={6} $center>Black</Combo>
            <Caret $gap={4} />
            <Combo $w={84} $gap={4}><LineSample /></Combo>
            <Caret $gap={2} />
            <Combo $w={83} $gap={6}>0 in</Combo>
            <Caret $gap={3} />
            <Combo $w={100} $gap={5} $center>By Pen</Combo>
            <Caret $gap={4} />
            <Combo $w={83} $gap={6}>None</Combo>
            <Caret $gap={4} />
            <BarSep $gap={6} />
            <Combo $w={98} $gap={5} $off />
            <Caret $off $gap={-18} />
            <Combo $w={97} $gap={12} $off />
            <Caret $off $gap={-18} />
            <Tool $s={26} $gap={11}><Icon name="pen" size={24} /></Tool>
            <Tool $s={26} $gap={5} $flag={1} $on={1}><Icon name="cup" size={22} /></Tool>
          </Toolbar>
        </ToolRow>

        <ToolRow>
          <Toolbar $w={40}>
            <GripV $h={24} $ml={4} />
            <Tool $s={26} $gap={4}><Icon name="pts" /></Tool>
          </Toolbar>
          <Toolbar $w={41} $ml={0}>
            <GripV $h={24} $ml={4} />
            <Tool $s={26} $gap={3}><Icon name="hatchCircle" size={24} /></Tool>
          </Toolbar>
        </ToolRow>

        <Main>
          <ToolBox $w={67} $ml={2} $mr={1}>
            <GripH />
            <BoxCols>
              <Column items={LEFT_ONE} />
              <Column items={LEFT_TWO} />
            </BoxCols>
          </ToolBox>

          <Center>
            <TopRulerRow>
              <RulerCorner>
                <svg width="10" height="12"><path d="M5 1v10M2 4l3-3 3 3M1 11h8" fill="none" stroke="#111" /></svg>
              </RulerCorner>
              <TopRuler>
                <InchCell $w={16} $blank />
                {inches.map((n) => (
                  <InchCell key={n}>{n} in</InchCell>
                ))}
                <CursorMark $x={743} />
              </TopRuler>
              <RulerFill />
            </TopRulerRow>

            <MiddleRow>
              <SideRuler>
                {sideInches.map((n) => (
                  <SideCell key={n}><SideLabel>{n} in</SideLabel></SideCell>
                ))}
                <SideCursor />
              </SideRuler>
              <Canvas />
              <VScroll>
                <ScrollBtn><Arrow $dir="up" /></ScrollBtn>
                <VThumb />
                <ScrollBtn $auto><Arrow $dir="down" /></ScrollBtn>
              </VScroll>
            </MiddleRow>

            <BottomRow>
              <SheetTab $w={64} $ml={26} $on>
                <Icon name="modelTab" size={14} />
                Model
              </SheetTab>
              <SheetTab $w={60} $ml={2}>
                <Icon name="paperTab" size={14} />
                Paper 1
              </SheetTab>
              <HScroll>
                <ScrollBtn $w={20}><Arrow $dir="left" /></ScrollBtn>
                <HThumb />
                <ScrollBtn $end><Arrow $dir="right" /></ScrollBtn>
              </HScroll>
            </BottomRow>
          </Center>

          <PanelStrip>
            <StripTab><Icon name="docCoin" size={18} /></StripTab>
            <StripTab><Icon name="viewWin" size={18} /></StripTab>
            <StripTab><Icon name="bluePrint" size={18} /></StripTab>
            <StripTab><Icon name="cogs" size={18} /></StripTab>
            <StripTab><Icon name="arrowWin" size={18} /></StripTab>
            <StyleTab>
              <Icon name="renderTea" size={16} />
              <StyleTabText>Advanced Rendering Styles</StyleTabText>
            </StyleTab>
          </PanelStrip>

          <ToolBox $w={69}>
            <GripH />
            <BoxCols>
              <Column items={RIGHT_ONE} />
              <Column items={RIGHT_TWO} />
            </BoxCols>
          </ToolBox>
        </Main>

        <Inspector>
          <GripV $h={26} />
          <Tool $s={22} $gap={1}><Icon name="redCheck" size={20} /></Tool>
          <Tool $s={20} $gap={0}><Icon name="redX" size={18} /></Tool>
          <Tool $s={20} $gap={2}><Icon name="table" size={18} /></Tool>
          <BarSep $gap={3} />
          <SmallGroup $ml={5} $w={51}>
            <GroupHead><LockTag />Length</GroupHead>
            <ValueField>0 in</ValueField>
          </SmallGroup>
          <SmallGroup $ml={4} $w={51}>
            <GroupHead><LockTag />Angle</GroupHead>
            <ValueField>
              0
              <Spinner>
                <SpinBtn><Arrow $dir="up" /></SpinBtn>
                <SpinBtn><Arrow $dir="down" /></SpinBtn>
              </Spinner>
            </ValueField>
          </SmallGroup>
        </Inspector>

        <StatusBar>
          <StatusText>Define the start point of the line</StatusText>
          <StatusRight>
            <Toggle $w={33}>SNAP</Toggle>
            <Toggle $w={31}>GEO</Toggle>
            <CoordGroup $ml={18}>
              <CoordTag><CoordCheck />X</CoordTag>
              <ValueField $w={73}>8.408408 in</ValueField>
            </CoordGroup>
            <CoordGroup $ml={13}>
              <CoordTag><CoordCheck />Y</CoordTag>
              <ValueField $w={73}>8.566592 in</ValueField>
            </CoordGroup>
            <CoordGroup $ml={13}>
              <CoordTag><CoordCheck $dim />Z</CoordTag>
              <ValueField $w={73} $dim>0 in</ValueField>
            </CoordGroup>
            <StatusCell $w={56} $ml={6}>57%</StatusCell>
            <StatusCell $w={61}>2:58 PM</StatusCell>
          </StatusRight>
        </StatusBar>

        <Dropdown>
          <Gutter />
          <MenuList>
            {TOOLS_MENU.map((row, n) => {
              if (row === "-") return <RowSep key={n} />
              const [text, at, end] = row
              return (
                <Row key={n}>
                  <Key text={text} at={at} />
                  {end === ">" ? <SubArrow /> : end ? <Shortcut>{end}</Shortcut> : null}
                </Row>
              )
            })}
          </MenuList>
          <MoreArrow />
        </Dropdown>
        <BehindWindow />
      </Screen>
    </>
  )
}

export default App
